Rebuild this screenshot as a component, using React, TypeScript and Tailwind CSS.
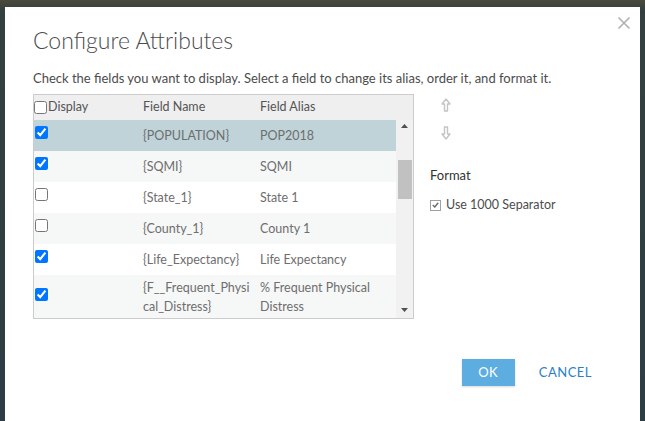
type Field = {
  key: string;
  name: string[];
  alias: string[];
  checked: boolean;
  tall?: boolean;
};

const FIELDS: Field[] = [
  { key: 'pop', name: ['{POPULATION}'], alias: ['POP2018'], checked: true },
  { key: 'sqmi', name: ['{SQMI}'], alias: ['SQMI'], checked: true },
  { key: 'state', name: ['{State_1}'], alias: ['State 1'], checked: false },
  { key: 'county', name: ['{County_1}'], alias: ['County 1'], checked: false },
  { key: 'life', name: ['{Life_Expectancy}'], alias: ['Life Expectancy'], checked: true },
  {
    key: 'distress',
    name: ['{F__Frequent_Physi', 'cal_Distress}'],
    alias: ['% Frequent Physical', 'Distress'],
    checked: true,
    tall: true,
  },
];

function Checkbox({ checked }: { checked: boolean }) {
  return (
    <input
      type="checkbox"
      readOnly
      checked={checked}
      className="m-0 h-[13px] w-[13px] shrink-0 accent-[#0075ff]"
    />
  );
}

function MoveArrow({ dir }: { dir: 'up' | 'down' }) {
  return (
    <svg width="10" height="14" viewBox="0 0 10 14" className="text-[#c4c4c4]">
      <path
        d={dir === 'up' ? 'M5 1 L9 6 L6.5 6 L6.5 13 L3.5 13 L3.5 6 L1 6 Z' : 'M5 13 L9 8 L6.5 8 L6.5 1 L3.5 1 L3.5 8 L1 8 Z'}
        fill="white"
        stroke="currentColor"
        strokeWidth="1.4"
        strokeLinejoin="round"
      />
    </svg>
  );
}

export default function App() {
  return (
    <div className="h-[421px] w-[645px] overflow-hidden bg-[linear-gradient(180deg,#4a4a3c_0px,#33403f_10px,#2d3d44_100%)] pl-[5px] pr-[5px] pt-[7px] font-['Lato','Open_Sans',sans-serif]">
      <div className="relative h-[430px] bg-white pl-[28px] pr-[20px]">
        <button type="button" className="absolute right-[9px] top-[9px] text-[#b0b0b0]">
          <svg width="14" height="14" viewBox="0 0 14 14">
            <path d="M1.5 1.5 L12.5 12.5 M12.5 1.5 L1.5 12.5" stroke="currentColor" strokeWidth="1.6" />
          </svg>
        </button>

        <h1 className="pt-[18px] text-[23px] font-light leading-[30px] text-[#4c4c4c]">Configure Attributes</h1>
        <p className="mt-[15px] text-[13px] leading-[17px] text-[#4c4c4c]">
          Check the fields you want to display. Select a field to change its alias, order it, and format it.
        </p>

        <div className="mt-[7px] flex">
          <div className="w-[381px] border border-[#cccccc] text-[12.5px] text-[#6e6e6e]">
            <div className="flex h-[25px] items-center bg-[#efefef] text-[#555]">
              <div className="flex w-[109px] items-center">
                <Checkbox checked={false} />
                <span className="ml-[1px]">Display</span>
              </div>
              <div className="w-[117px]">Field Name</div>
              <div>Field Alias</div>
            </div>
            <div className="flex h-[198px]">
              <div className="flex-1 overflow-hidden">
                {FIELDS.map((f, i) => (
                  <div
                    key={f.key}
                    className={`flex items-center ${f.tall ? 'h-[44px]' : 'h-[31px]'} ${
                      i === 0 ? 'bg-[#bfd3d8]' : i % 2 === 1 ? 'bg-[#f6f7f7]' : 'bg-white'
                    }`}
                  >
                    <div className="w-[109px] pl-[1px]">
                      <Checkbox checked={f.checked} />
                    </div>
                    <div className="w-[117px] leading-[19px]">
                      {f.name.map((n) => (
                        <div key={n}>{n}</div>
                      ))}
                    </div>
                    <div className="leading-[19px]">
                      {f.alias.map((a) => (
                        <div key={a}>{a}</div>
                      ))}
                    </div>
                  </div>
                ))}
              </div>
              <div className="flex w-[17px] flex-col items-center bg-[#f1f1f1]">
                <svg width="7" height="4" viewBox="0 0 7 4" className="mt-[4px] fill-[#505050]">
                  <path d="M0 4 L3.5 0 L7 4 Z" />
                </svg>
                <div className="mt-[32px] h-[39px] w-[14px] bg-[#c1c1c1]" />
                <div className="flex-1" />
                <svg width="7" height="4" viewBox="0 0 7 4" className="mb-[6px] fill-[#505050]">
                  <path d="M0 0 L3.5 4 L7 0 Z" />
                </svg>
              </div>
            </div>
          </div>

          <div className="ml-[16px] flex flex-col">
            <div className="flex w-[32px] flex-col items-center pt-[4px]">
              <MoveArrow dir="up" />
              <div className="mt-[14px]">
                <MoveArrow dir="down" />
              </div>
            </div>
            <div className="mt-[27px] text-[13px] leading-[16px] text-[#333]">Format</div>
            <div className="mt-[13px] flex items-center">
              <span className="flex h-[11px] w-[11px] items-center justify-center border border-[#a0a0a0] bg-white">
                <svg width="7" height="6" viewBox="0 0 7 6">
                  <path d="M0.8 3 L2.8 5 L6.2 0.8" fill="none" stroke="#6a6a6a" strokeWidth="1.4" />
                </svg>
              </span>
              <span className="ml-[5px] text-[12.5px] text-[#4c4c4c]">Use 1000 Separator</span>
            </div>
          </div>
        </div>

        <div className="mt-[40px] flex items-center justify-end pr-[28px]">
          <button type="button" className="h-[27px] w-[53px] bg-[#5dade0] text-[13px] tracking-[0.5px] text-white shadow-[0_1px_2px_rgba(0,0,0,0.15)]">
            OK
          </button>
          <button type="button" className="ml-[24px] text-[13px] tracking-[0.5px] text-[#2b80c5]">
            CANCEL
          </button>
        </div>
      </div>
    </div>
  );
}
